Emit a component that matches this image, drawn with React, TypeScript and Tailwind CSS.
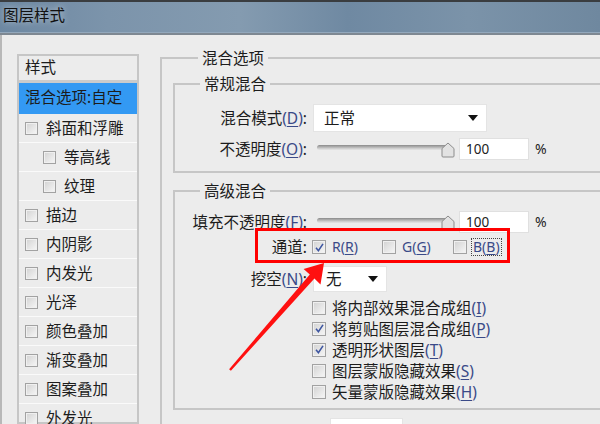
import React from "react";

const M = ({ k }: { k: string }) => (
  <span className="text-[#3a4a88]">
    (<span className="underline underline-offset-2">{k}</span>)
  </span>
);

const Check = ({ checked = false, size = 14 }: { checked?: boolean; size?: number }) => (
  <span
    className={`${size === 13 ? "w-[13px] h-[13px]" : "w-[14px] h-[14px]"} shrink-0 inline-flex items-center justify-center border border-[#a2a2a2] bg-[linear-gradient(135deg,#d2d2d2,#f7f7f7)] shadow-[inset_0_0_0_1px_#f0f0f0]`}
  >
    {checked && (
      <svg viewBox="0 0 12 12" className="w-[11px] h-[11px]">
        <path d="M2.2 6.2 L4.8 9.4 L9.8 2" fill="none" stroke="#3d55a0" strokeWidth="1.7" />
      </svg>
    )}
  </span>
);

const Slider = () => (
  <div className="relative w-[142px] h-[22px] ml-[6px]">
    <div className="absolute left-[4px] right-[8px] top-[7px] h-[5px] rounded-full bg-[linear-gradient(#8a8a8a,#cfcfcf_70%,#e6e6e6)]" />
    <svg viewBox="0 0 14 16" className="absolute right-0 top-[4px] w-[14px] h-[16px]">
      <path d="M7 1 L13 6.5 V14 Q13 15 12 15 H2 Q1 15 1 14 V6.5 Z" fill="#e2e2e2" stroke="#8c8c8c" strokeWidth="1" />
    </svg>
  </div>
);

const Num = () => (
  <>
    <div className="ml-[4px] w-[70px] h-[22px] bg-white border border-[#e0e0e0] flex items-center pl-[6px] text-[13.5px] text-[#222]">
      100
    </div>
    <span className="ml-[6px] text-[14px]">%</span>
  </>
);

const Tri = () => (
  <svg viewBox="0 0 10 6" className="w-[10px] h-[6px]">
    <polygon points="0,0 10,0 5,6" fill="#111" />
  </svg>
);

const items: { t: string; sub?: boolean }[] = [
  { t: "斜面和浮雕" },
  { t: "等高线", sub: true },
  { t: "纹理", sub: true },
  { t: "描边" },
  { t: "内阴影" },
  { t: "内发光" },
  { t: "光泽" },
  { t: "颜色叠加" },
  { t: "渐变叠加" },
  { t: "图案叠加" },
  { t: "外发光" },
];

const opts: { t: string; k: string; c: boolean }[] = [
  { t: "将内部效果混合成组", k: "I", c: false },
  { t: "将剪贴图层混合成组", k: "P", c: true },
  { t: "透明形状图层", k: "T", c: true },
  { t: "图层蒙版隐藏效果", k: "S", c: false },
  { t: "矢量蒙版隐藏效果", k: "H", c: false },
];

export default function App() {
  return (
    <div className="relative w-[600px] h-[424px] overflow-hidden bg-[#ececec] text-[#1c1c1c] text-[15.5px] font-['Noto_Sans','Noto_Sans_CJK_SC',sans-serif]">
      {/* title bar */}
      <div className="h-[32px] border-t-2 border-[#3a3d40] bg-[linear-gradient(90deg,#6d88a2_0%,#7c94ab_18%,#849bb0_40%,#6f89a2_58%,#7b93a9_78%,#6f889f_100%)] flex items-center pl-[3px] pb-[4px]">
        <span className="leading-[20px] text-[#111] [text-shadow:0_0_6px_rgba(255,255,255,0.6)]">图层样式</span>
      </div>
      <div className="h-[1px] bg-[#93a8bc]" />
      <div className="h-[2px] bg-[#7e8892]" />

      {/* body */}
      <div className="flex h-[389px] overflow-hidden">
        <div className="w-[17px] shrink-0 border-l-2 border-[#b8b8b8]" />

        {/* style list */}
        <div className="w-[122px] shrink-0 mt-[19px] border-2 border-[#c6c6c6] bg-[#ececec] leading-[20px]">
          <div className="h-[27px] flex items-center pl-[6px] pb-[2px] border-b-[3px] border-[#cbcbcb]">样式</div>
          <div className="h-[31px] flex items-center pl-[6px] pb-[3px] bg-[#3399f3]">混合选项:自定</div>
          {items.map((it) => (
            <div
              key={it.t}
              className={`h-[29px] flex items-center gap-[8px] border-b border-[#fafafa] ${it.sub ? "pl-[24px]" : "pl-[6px]"}`}
            >
              <Check size={13} />
              <span>{it.t}</span>
            </div>
          ))}
        </div>

        {/* options */}
        <div className="ml-[21px] mt-[13px] shrink-0">
          <fieldset className="w-[470px] border-2 border-[#c6c6c6] pl-[11px] pt-[6px] leading-[20px]">
            <legend className="ml-[25px] px-[4px] leading-[20px]">混合选项</legend>

            <fieldset className="border-2 border-[#c6c6c6] pt-[10px] pb-[11px]">
              <legend className="ml-[25px] px-[4px] leading-[20px]">常规混合</legend>
              <div className="flex items-center h-[28px]">
                <div className="w-[132px] text-right">
                  混合模式<M k="D" />:
                </div>
                <div className="ml-[6px] w-[174px] h-[28px] bg-white border border-[#e4e4e4] flex items-center justify-between pl-[10px] pr-[8px]">
                  <span>正常</span>
                  <Tri />
                </div>
              </div>
              <div className="flex items-center h-[22px] mt-[6px]">
                <div className="w-[132px] text-right">
                  不透明度<M k="O" />:
                </div>
                <Slider />
                <Num />
              </div>
            </fieldset>

            <fieldset className="mt-[8px] border-2 border-[#c6c6c6] pt-[10px] pb-[6px]">
              <legend className="ml-[25px] px-[4px] leading-[20px]">高级混合</legend>
              <div className="flex items-center h-[22px]">
                <div className="w-[132px] text-right">
                  填充不透明度<M k="F" />:
                </div>
                <Slider />
                <Num />
              </div>

              <div className="flex items-center h-[20px] mt-[4px]">
                <div className="w-[132px] text-right">通道:</div>
                <div className="ml-[5px] w-[70px] flex items-center gap-[6px]">
                  <Check checked />
                  <span className="text-[14px] text-[#3a4a88]">
                    R(<span className="underline underline-offset-2">R</span>)
                  </span>
                </div>
                <div className="w-[71px] flex items-center gap-[6px]">
                  <Check />
                  <span className="text-[14px] text-[#3a4a88]">
                    G(<span className="underline underline-offset-2">G</span>)
                  </span>
                </div>
                <div className="flex items-center gap-[4px]">
                  <Check />
                  <span className="text-[14px] text-[#3a4a88] border border-dotted border-[#444] px-[1px] leading-[16px]">
                    B(<span className="underline underline-offset-2">B</span>)
                  </span>
                </div>
              </div>

              <div className="flex items-center h-[26px] mt-[9px]">
                <div className="w-[132px] text-right">
                  挖空<M k="N" />:
                </div>
                <div className="ml-[6px] w-[74px] h-[26px] bg-white border border-[#e4e4e4] flex items-center justify-between pl-[12px] pr-[8px]">
                  <span>无</span>
                  <Tri />
                </div>
              </div>

              <div className="mt-[5px] flex flex-col">
                {opts.map((o) => (
                  <div key={o.t} className="h-[21px] flex items-center gap-[6px] pl-[137px]">
                    <Check checked={o.c} />
                    <span>
                      {o.t}
                      <M k={o.k} />
                    </span>
                  </div>
                ))}
              </div>
            </fieldset>

            <div className="mt-[8px] ml-[157px] w-[73px] h-[24px] bg-white border border-[#e4e4e4]" />
          </fieldset>
        </div>
      </div>

      {/* annotation: red highlight box */}
      <div className="absolute left-[255px] top-[228px] w-[255px] h-[35px] border-[3px] border-[#ff0000]" />
      {/* annotation: red arrow */}
      <svg className="absolute inset-0 w-[600px] h-[424px] pointer-events-none" viewBox="0 0 600 424">
        <polygon
          points="324,263 320.5,284.5 314.4,278.5 230.9,370.8 229.1,369.2 309.8,274.5 303.6,269"
          fill="#ff1010"
        />
      </svg>
    </div>
  );
}
